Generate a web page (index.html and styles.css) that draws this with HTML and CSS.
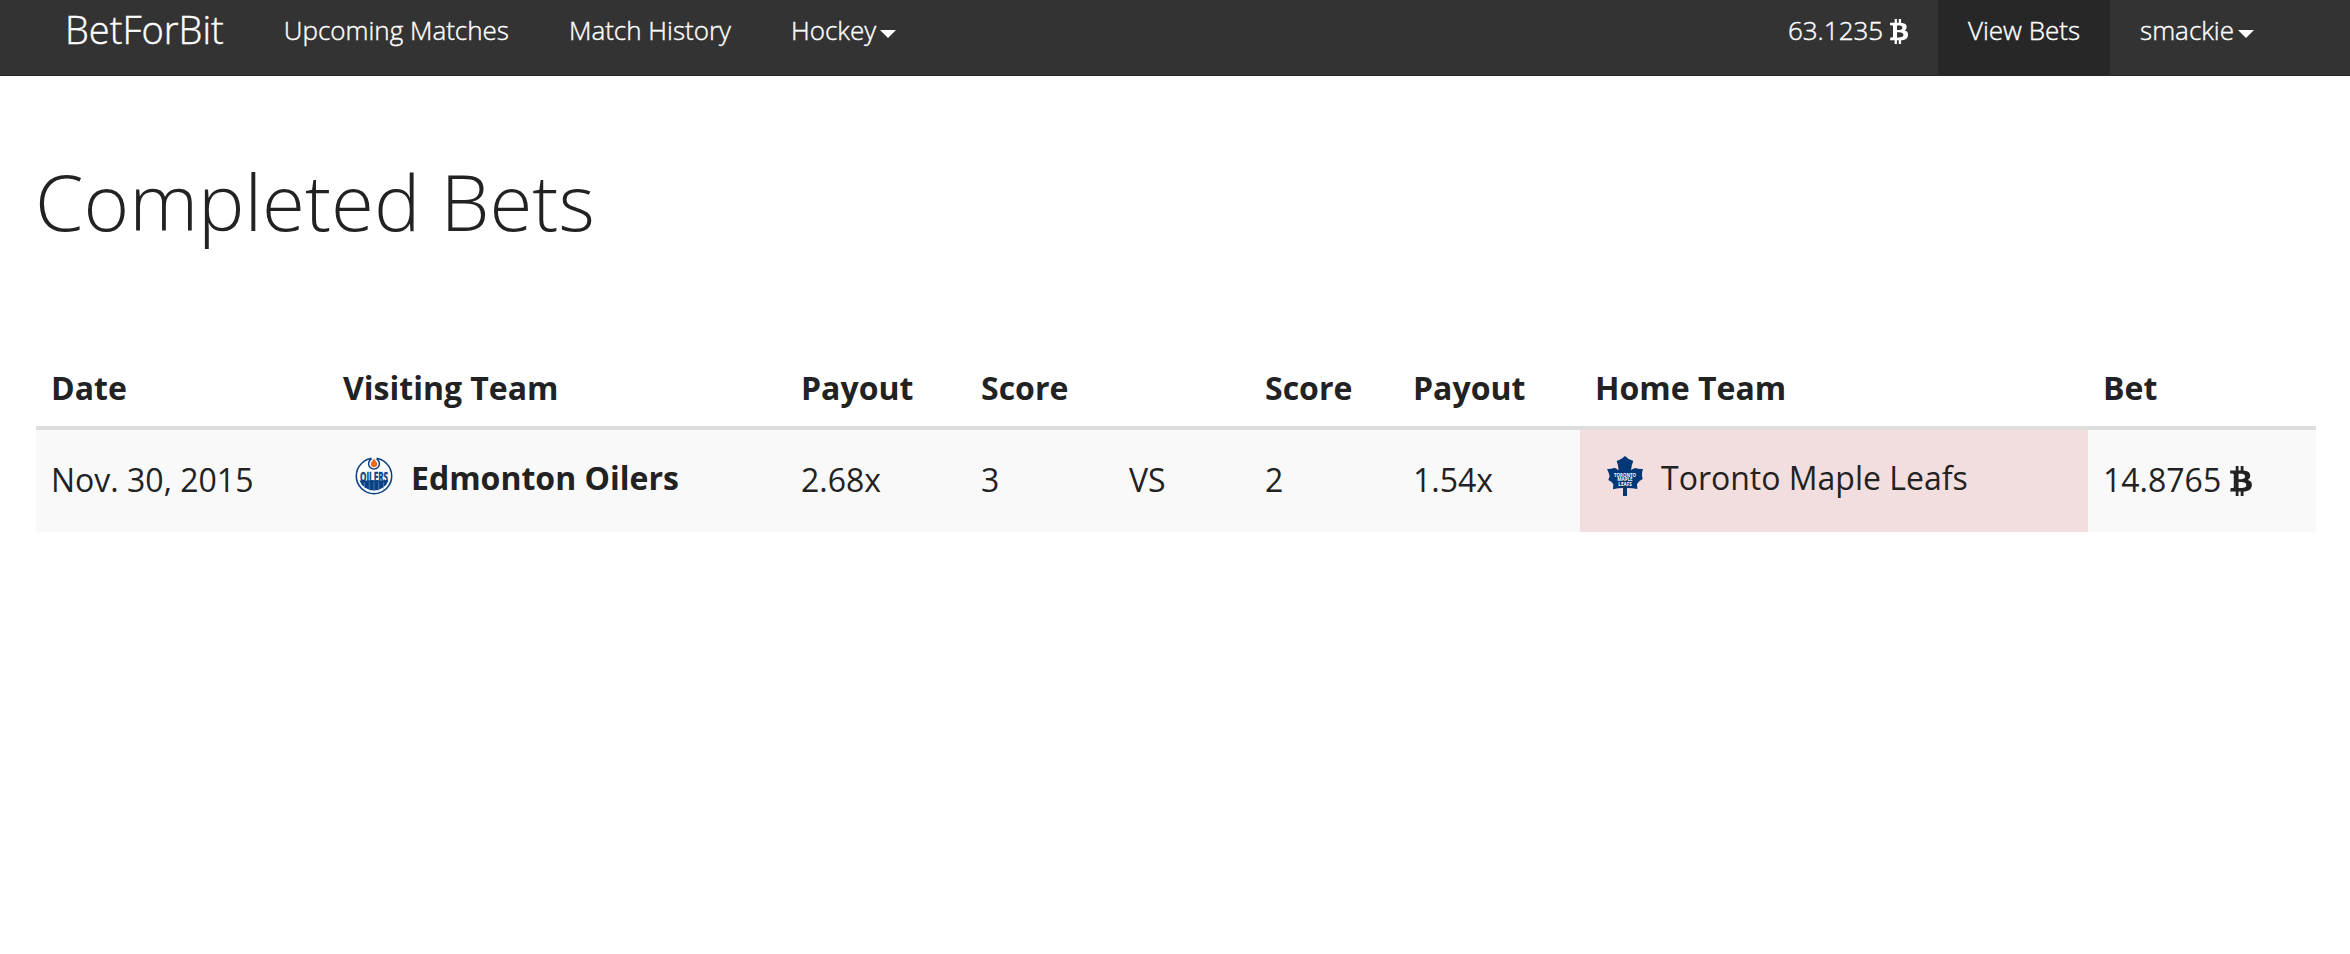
FILE: index.html
```html
<!DOCTYPE html>
<html lang="en">
<head>
    <meta charset="UTF-8">
    <meta name="viewport" content="width=device-width, initial-scale=1.0">
    <title>BetForBit - Completed Bets</title>
    <link rel="stylesheet" href="styles.css">
</head>
<body>
    <svg class="sprite" aria-hidden="true">
        <symbol id="btc" viewBox="56 384 1202 1664">
            <path d="M1167 896q18 182-131 258 117 28 175 103t45 214q-7 71-32.5 125t-64.5 89-97 58.5-121.5 34.5-145.5 15v255h-154v-251q-80 0-122-1v252h-154v-255q-18 0-54-.5t-55-.5h-200l31-183h111q50 0 58-51v-402h16q-6-1-16-1v-287q-13-68-89-68h-111v-164l212 1q64 0 97-1v-252h154v247q82-2 122-2v-245h154v252q79 7 140 22.5t113 45 82.5 78 36.5 114.5zm-215 545q0-36-15-64t-37-46-57.5-30.5-65.5-18.5-74-9-69-3-64.5 1-47.5 1v338q8 0 37 .5t48 .5 53-1.5 58.5-4 57-8.5 55.5-14 47.5-21 39.5-30 24.5-40 9.5-51zm-71-476q0-33-12.5-58.5t-30.5-42-48-28-55-16.5-61.5-8-58-2.5-54 1-39.5.5v307q5 0 34.5.5t46.5 0 50-2 55-5.5 51.5-11 48.5-18.5 37-27 27-38.5 9-51z"/>
        </symbol>
    </svg>

    <nav class="navbar">
        <a href="#" class="navbar-brand">BetForBit</a>
        <ul class="nav">
            <li><a href="#">Upcoming Matches</a></li>
            <li><a href="#">Match History</a></li>
            <li><a href="#">Hockey<span class="caret"></span></a></li>
        </ul>
        <ul class="nav nav-right">
            <li><a href="#">63.1235 <svg class="btc"><use href="#btc"/></svg></a></li>
            <li class="active"><a href="#">View Bets</a></li>
            <li><a href="#">smackie<span class="caret"></span></a></li>
        </ul>
    </nav>

    <main class="container">
        <h1>Completed Bets</h1>

        <table class="table">
            <colgroup>
                <col class="col-date">
                <col class="col-visiting">
                <col class="col-payout">
                <col class="col-score">
                <col class="col-vs">
                <col class="col-score-home">
                <col class="col-payout-home">
                <col class="col-home">
                <col class="col-bet">
            </colgroup>
            <thead>
                <tr>
                    <th>Date</th>
                    <th>Visiting Team</th>
                    <th>Payout</th>
                    <th>Score</th>
                    <th></th>
                    <th>Score</th>
                    <th>Payout</th>
                    <th>Home Team</th>
                    <th>Bet</th>
                </tr>
            </thead>
            <tbody>
                <tr>
                    <td>Nov. 30, 2015</td>
                    <td class="team winner">
                        <div class="team-name">
                            <svg class="logo" viewBox="0 0 38 38">
                                <circle cx="19" cy="19" r="19" fill="#fff"/>
                                <circle cx="19" cy="19" r="17.7" fill="#fff" stroke="#0b4285" stroke-width="1.6"/>
                                <path d="M4.500 23.500h29a15.500 15.500 0 0 1-29 0z" fill="#0b4285"/>
                                <path d="M9.500 25v8M14.300 25v10M19 25v11M23.700 25v10M28.500 25v8" stroke="#8fabc9" stroke-width=".5"/>
                                <text x="5" y="24.500" textLength="28" lengthAdjust="spacingAndGlyphs" class="oilers-text">OILERS</text>
                                <circle cx="19" cy="6.700" r="5.400" fill="#fff" stroke="#0b4285" stroke-width="1.500"/>
                                <path d="M16.500 0h5v2.400h-5z" fill="#fff"/>
                                <path d="M19 1.500c1 2 3.200 3.400 3.200 5.600a3.200 3.200 0 0 1-6.400 0c0-2.200 2.200-3.600 3.200-5.600z" fill="#ee6a1f"/>
                            </svg>
                            Edmonton Oilers
                        </div>
                    </td>
                    <td>2.68x</td>
                    <td>3</td>
                    <td>VS</td>
                    <td>2</td>
                    <td>1.54x</td>
                    <td class="team danger">
                        <div class="team-name">
                            <svg class="logo logo-leafs" viewBox="0 0 108 120">
                                <path d="M54 0q9 10 25 15q-6 12-7 28q7-6 13-7q10 4 23 3q-4 9-3 20l2 10q-10 4-17 15l1 15q-14-3-31-3v24H48V96q-15 0-30 4l1-15Q14 76 4 72l4-12Q5 48 0 39q12 1 22-4q6 2 13 8q-1-16-6-28q14-4 25-15z" fill="#003777"/>
                                <text x="54" y="63" textLength="66" lengthAdjust="spacingAndGlyphs" class="leafs-text">TORONTO</text>
                                <text x="54" y="76" textLength="46" lengthAdjust="spacingAndGlyphs" class="leafs-text">MAPLE</text>
                                <text x="54" y="90" textLength="40" lengthAdjust="spacingAndGlyphs" class="leafs-text">LEAFS</text>
                            </svg>
                            Toronto Maple Leafs
                        </div>
                    </td>
                    <td>14.8765 <svg class="btc"><use href="#btc"/></svg></td>
                </tr>
            </tbody>
        </table>
    </main>
</body>
</html>
```
FILE: styles.css
```css
* {
    box-sizing: border-box;
}

body {
    margin: 0;
    background: #fff;
    color: #222;
    font-family: "Open Sans", sans-serif;
    font-size: 32px;
    line-height: 46px;
}

a {
    color: inherit;
    text-decoration: none;
}

.sprite {
    display: none;
}

/* navbar */
.navbar {
    display: flex;
    height: 76px;
    padding: 0 66px 0 35px;
    background: #333;
    border-bottom: 1px solid #2b2626;
    color: #fff;
    font-weight: 300;
    -webkit-text-stroke: .4px;
}

.navbar-brand {
    padding: 0 30px;
    font-size: 38px;
    line-height: 59px;
}

.nav {
    display: flex;
    margin: 0;
    padding: 0;
    list-style: none;
    font-size: 26px;
    line-height: 60px;
}

.nav a {
    display: block;
    height: 76px;
    padding: 0 30px;
}

.nav-right {
    margin-left: auto;
}

.nav .active {
    background: #272727;
}

.caret {
    display: inline-block;
    margin-left: 4px;
    vertical-align: 2px;
    border-top: 8px solid;
    border-left: 8px solid transparent;
    border-right: 8px solid transparent;
}

.btc {
    display: inline-block;
    width: 22px;
    height: 30px;
    fill: currentColor;
    vertical-align: -4px;
}

.nav .btc {
    width: 18px;
    height: 25px;
}

/* content */
.container {
    padding: 71px 34px 0 36px;
}

h1 {
    margin: 0 0 94px -1px;
    font-size: 78px;
    font-weight: 300;
    line-height: 109px;
}

.table {
    width: 2280px;
    table-layout: fixed;
    border-collapse: separate;
    border-spacing: 0;
}

.col-date { width: 292px; }
.col-visiting { width: 458px; }
.col-payout { width: 180px; }
.col-score { width: 148px; }
.col-vs { width: 136px; }
.col-score-home { width: 148px; }
.col-payout-home { width: 182px; }
.col-home { width: 508px; }
.col-bet { width: 228px; }

th,
td {
    padding: 15px;
    text-align: left;
    vertical-align: top;
    white-space: nowrap;
}

th {
    height: 80px;
    border-bottom: 4px solid #ddd;
    font-weight: 700;
}

td {
    height: 102px;
    padding-top: 27px;
    background: #f9f9f9;
}

.team {
    padding-top: 25px;
}

.team-name {
    display: flex;
    gap: 18px;
    padding-left: 12px;
}

.winner {
    font-weight: 700;
}

.danger {
    background: #f2dede;
}

.logo {
    width: 38px;
    height: 38px;
    margin-top: 2px;
    overflow: visible;
}

.logo-leafs {
    width: 36px;
    height: 40px;
    margin-top: 1px;
}

.oilers-text {
    fill: #0b4285;
    stroke: #0b4285;
    stroke-width: .5px;
    font-size: 14px;
    font-weight: 700;
}

.leafs-text {
    fill: #fff;
    font-size: 15px;
    font-weight: 700;
    text-anchor: middle;
}
```
